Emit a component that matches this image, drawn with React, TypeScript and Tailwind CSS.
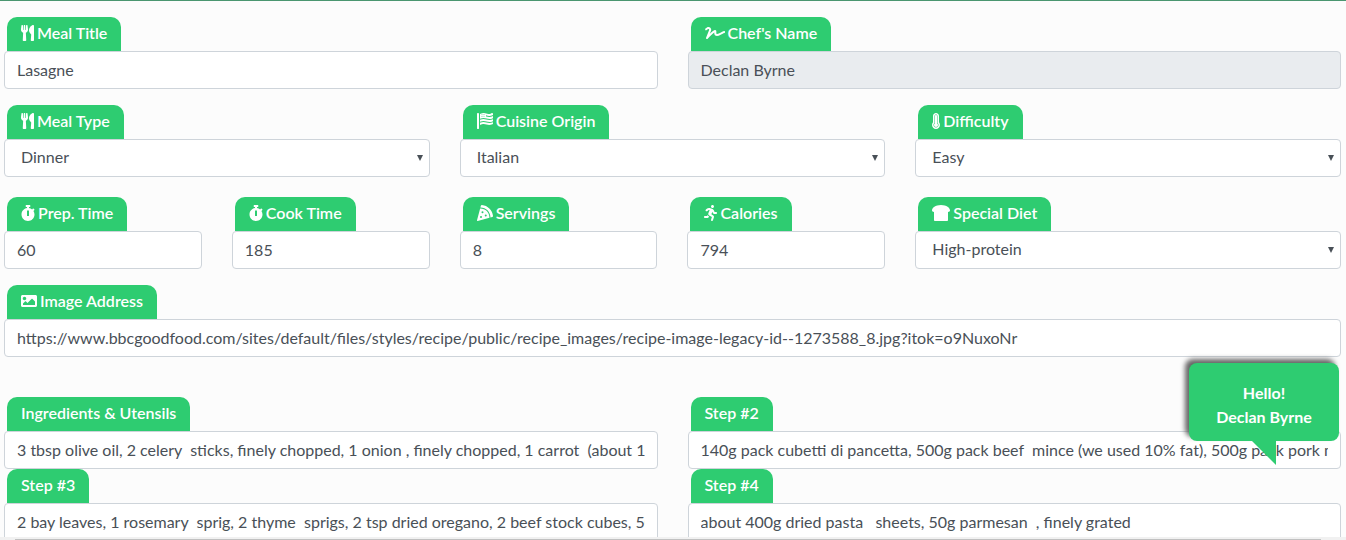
import React, { useId } from "react";
import {
  FaUtensils,
  FaSignature,
  FaFlagUsa,
  FaThermometerFull,
  FaStopwatch,
  FaPizzaSlice,
  FaRunning,
  FaBreadSlice,
  FaImage,
} from "react-icons/fa";
import type { IconType } from "react-icons";

type FieldProps = {
  label: string;
  value: string;
  icon?: IconType;
  iconWidth?: string;
  options?: boolean;
  readOnly?: boolean;
  className?: string;
};

const control =
  "block h-[38px] w-full rounded border border-[#ced4da] pb-0.5 text-base text-[#495057] outline-none";

function Field({
  label,
  value,
  icon: Icon,
  iconWidth = "w-4",
  options,
  readOnly,
  className = "",
}: FieldProps) {
  const id = useId();
  return (
    <div className={"min-w-0 " + className}>
      <label
        htmlFor={id}
        className="ml-[3px] flex h-[34px] w-fit items-center gap-[3px] rounded-t-[10px] bg-[#2ecc71] px-3.5 pb-0.5 text-base font-semibold whitespace-nowrap text-white"
      >
        {Icon && <Icon className={"h-4 shrink-0 " + iconWidth} aria-hidden="true" />}
        {label}
      </label>
      {options ? (
        <div className="relative">
          <select id={id} defaultValue={value} className={control + " appearance-none bg-white px-4"}>
            <option>{value}</option>
          </select>
          <svg
            viewBox="0 0 6 6"
            className="pointer-events-none absolute top-4 right-[7px] size-[6px] fill-[#495057]"
            aria-hidden="true"
          >
            <path d="M0 0h6L3 6z" />
          </svg>
        </div>
      ) : (
        <input
          id={id}
          type="text"
          defaultValue={value}
          readOnly={readOnly}
          className={control + " px-3 " + (readOnly ? "bg-[#e9ecef]" : "bg-white")}
        />
      )}
    </div>
  );
}

export default function App() {
  return (
    <div className="relative h-screen overflow-hidden border-t border-[#4a9670] bg-[#fcfcfc] font-['Lato',sans-serif]">
      <form className="flex flex-col pt-4 pr-[5px] pl-1">
        <div className="grid grid-cols-2 gap-x-[30px]">
          <Field label="Meal Title" value="Lasagne" icon={FaUtensils} iconWidth="w-[13px]" />
          <Field label="Chef's Name" value="Declan Byrne" icon={FaSignature} iconWidth="w-5" readOnly />
        </div>
        <div className="mt-4 grid grid-cols-3 gap-x-[30px]">
          <Field label="Meal Type" value="Dinner" icon={FaUtensils} iconWidth="w-[13px]" options />
          <Field label="Cuisine Origin" value="Italian" icon={FaFlagUsa} options />
          <Field label="Difficulty" value="Easy" icon={FaThermometerFull} iconWidth="w-2" options />
        </div>
        <div className="mt-5 grid grid-cols-6 gap-x-[30px] gap-y-4">
          <Field label="Prep. Time" value="60" icon={FaStopwatch} iconWidth="w-3.5" />
          <Field label="Cook Time" value="185" icon={FaStopwatch} iconWidth="w-3.5" />
          <Field label="Servings" value="8" icon={FaPizzaSlice} />
          <Field label="Calories" value="794" icon={FaRunning} iconWidth="w-[13px]" />
          <Field
            className="col-span-2"
            label="Special Diet"
            value="High-protein"
            icon={FaBreadSlice}
            iconWidth="w-[18px]"
            options
          />
          <Field
            className="col-span-6"
            label="Image Address"
            value="https://www.bbcgoodfood.com/sites/default/files/styles/recipe/public/recipe_images/recipe-image-legacy-id--1273588_8.jpg?itok=o9NuxoNr"
            icon={FaImage}
          />
        </div>
        <div className="mt-10 grid grid-cols-2 gap-x-[30px]">
          <Field
            label="Ingredients & Utensils"
            value="3 tbsp olive oil, 2 celery  sticks, finely chopped, 1 onion , finely chopped, 1 carrot  (about 100g), finely chopped"
          />
          <Field
            label="Step #2"
            value="140g pack cubetti di pancetta, 500g pack beef  mince (we used 10% fat), 500g pack pork mince"
          />
          <Field
            label="Step #3"
            value="2 bay leaves, 1 rosemary  sprig, 2 thyme  sprigs, 2 tsp dried oregano, 2 beef stock cubes, 500ml milk"
          />
          <Field label="Step #4" value="about 400g dried pasta   sheets, 50g parmesan  , finely grated" />
        </div>
      </form>
      <div className="absolute right-[7px] bottom-[99px] h-[78px] w-[150px] rounded-lg bg-[#2ecc71] pt-[18px] text-center text-base leading-6 font-bold text-white shadow-[-4px_-4px_5px_#666]">
        <p>Hello!</p>
        <p>Declan Byrne</p>
        <svg
          viewBox="0 0 24 24"
          className="absolute top-full left-[63px] size-6 fill-[#2ecc71]"
          aria-hidden="true"
        >
          <path d="M0 0h24v24z" />
        </svg>
      </div>
      <div className="absolute inset-x-0 bottom-0 h-[3px] bg-[#f1f1f1] pt-0.5 pr-[25px] pl-[15px]">
        <div className="h-px bg-[#c1c1c1]" />
      </div>
    </div>
  );
}
